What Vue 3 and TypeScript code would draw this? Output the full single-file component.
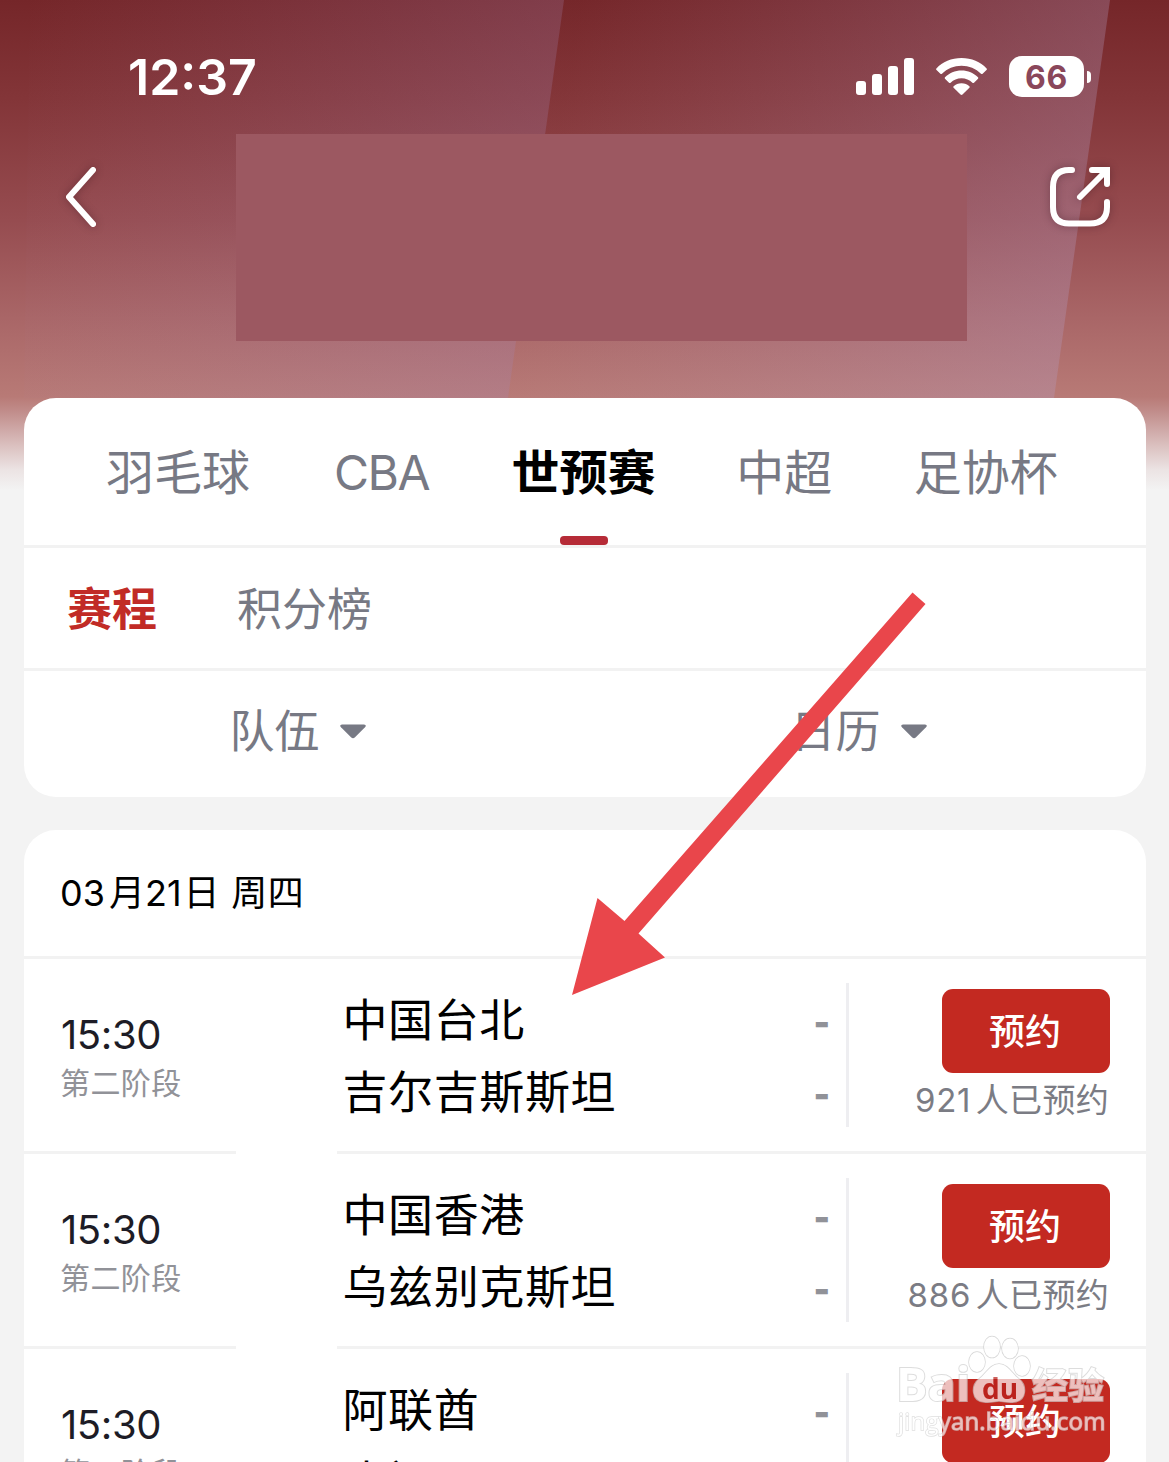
<script setup lang="ts">
interface Tab { label: string; active?: boolean; latin?: boolean }
interface Match { time: string; stage: string; home: string; away: string; booked: number }

const tabs: Tab[] = [
  { label: '羽毛球' },
  { label: 'CBA', latin: true },
  { label: '世预赛', active: true },
  { label: '中超' },
  { label: '足协杯' },
]

const filters: string[] = ['队伍', '日历']

const matches: Match[] = [
  { time: '15:30', stage: '第二阶段', home: '中国台北', away: '吉尔吉斯斯坦', booked: 921 },
  { time: '15:30', stage: '第二阶段', home: '中国香港', away: '乌兹别克斯坦', booked: 886 },
  { time: '15:30', stage: '第二阶段', home: '阿联酋', away: '也门', booked: 802 },
]
</script>

<template>
  <div class="screen">
    <svg class="backdrop" viewBox="0 0 1169 490" aria-hidden="true">
      <defs>
        <linearGradient id="base" x1="0" y1="0" x2="0" y2="1">
          <stop offset="0" stop-color="#752629" />
          <stop offset="0.2" stop-color="#833538" />
          <stop offset="0.45" stop-color="#964c50" />
          <stop offset="0.65" stop-color="#a96667" />
          <stop offset="0.81" stop-color="#b87a76" />
          <stop offset="0.84" stop-color="#c18d8b" />
          <stop offset="0.91" stop-color="#dbc1c0" />
          <stop offset="0.96" stop-color="#ece4e4" />
          <stop offset="1" stop-color="#f3f3f3" />
        </linearGradient>
        <linearGradient id="bandA" x1="0" y1="0" x2="1" y2="0.12">
          <stop offset="0" stop-color="#a586b4" stop-opacity="0" />
          <stop offset="1" stop-color="#a586b4" stop-opacity="0.25" />
        </linearGradient>
        <linearGradient id="bandB" x1="0" y1="0" x2="1" y2="0.12">
          <stop offset="0" stop-color="#b49bc0" stop-opacity="0" />
          <stop offset="0.12" stop-color="#b49bc0" stop-opacity="0.01" />
          <stop offset="1" stop-color="#b49bc0" stop-opacity="0.31" />
        </linearGradient>
      </defs>
      <rect width="1169" height="490" fill="url(#base)" />
      <path d="M30 0H564L508 398H24z" fill="url(#bandA)" />
      <path d="M564 0H1110L1054 398H508z" fill="url(#bandB)" />
    </svg>

    <header class="header">
      <div class="status">
        <span class="clock">12:37</span>
        <div class="indicators">
          <svg class="signal" viewBox="0 0 58 38">
            <rect x="0" y="23" width="10" height="14" rx="3" />
            <rect x="16" y="16" width="10" height="21" rx="3" />
            <rect x="32" y="8" width="10" height="29" rx="3" />
            <rect x="48" y="0" width="10" height="37" rx="3" />
          </svg>
          <svg class="wifi" viewBox="0 0 51 38">
            <path d="M25.500 0C35.500 0 44.500 4 50.600 10.400Q51.200 11.200 50.500 12L46.600 15.800Q45.800 16.400 45 15.700C39.800 10.700 33 7.800 25.500 7.800S11.200 10.700 6 15.700Q5.200 16.400 4.400 15.800L.5 12Q-.2 11.200 .4 10.400C6.500 4 15.500 0 25.500 0z" />
            <path d="M25.500 12.500C32 12.500 37.700 15 42 19.200Q42.700 20 42 20.800L38 24.700Q37.200 25.300 36.400 24.700C33.500 22 29.700 20.300 25.500 20.300S17.500 22 14.600 24.700Q13.800 25.300 13 24.700L9 20.800Q8.300 20 9 19.200C13.300 15 19 12.500 25.500 12.500z" />
            <path d="M25.500 25.300C28.700 25.300 31.400 26.400 33.400 28.200Q34.100 29 33.400 29.800L26.500 36.600Q25.500 37.500 24.500 36.600L17.600 29.800Q16.900 29 17.600 28.200C19.600 26.400 22.300 25.300 25.500 25.300z" />
          </svg>
          <div class="battery">66</div>
          <div class="nub"></div>
        </div>
      </div>
      <div class="nav">
        <svg class="back" viewBox="0 0 36 64"><path d="M30 6L6 33L30 60" /></svg>
        <div class="title"></div>
        <svg class="share" viewBox="0 0 66 66">
          <path d="M25 6H22Q6 6 6 23V43Q6 59.500 22 59.500H43Q60 59.500 60 43V38" />
          <path d="M33 33L58 8M45 6H60V20" />
        </svg>
      </div>
    </header>

    <section class="card menu">
      <nav class="tabs">
        <span v-for="t in tabs" :key="t.label" class="tab" :class="{ active: t.active, latin: t.latin }">{{ t.label }}</span>
      </nav>
      <nav class="subtabs">
        <span class="subtab active">赛程</span>
        <span class="subtab">积分榜</span>
      </nav>
      <div class="filters">
        <div v-for="f in filters" :key="f" class="filter">
          <span>{{ f }}</span>
          <svg class="caret" viewBox="0 0 26 15"><path d="M2 .5H24Q27 1 25 3.300L15 13.300Q13 15 11 13.300L1 3.300Q-1 1 2 .5z" /></svg>
        </div>
      </div>
    </section>

    <section class="card list">
      <h2 class="date">03<i class="month">月</i>21<i class="day">日</i> <i class="week">周四</i></h2>
      <article v-for="m in matches" :key="m.home" class="match">
        <div class="when">
          <span class="time">{{ m.time }}</span>
          <span class="stage">{{ m.stage }}</span>
        </div>
        <div class="teams">
          <div class="team"><span>{{ m.home }}</span><b>-</b></div>
          <div class="team"><span>{{ m.away }}</span><b>-</b></div>
        </div>
        <div class="action">
          <button class="book">预约</button>
          <span class="count"><em>{{ m.booked }}</em>人已预约</span>
        </div>
      </article>
    </section>

    <svg class="arrow" viewBox="0 0 1169 1462" aria-hidden="true">
      <path d="M912.500 592.500L925.500 604L638.500 933.500L665 957.500L572 995L597.500 898L624.500 921z" fill="#e9464b" />
    </svg>

    <div class="watermark" aria-hidden="true">
      <div class="brand">
        <span class="bai">Bai</span>
        <span class="paw">
          <svg viewBox="0 0 66 74">
            <ellipse cx="11" cy="27" rx="8" ry="10" />
            <ellipse cx="26" cy="12" rx="8" ry="10.500" />
            <ellipse cx="44" cy="13.500" rx="8" ry="10" />
            <ellipse cx="56" cy="31" rx="8" ry="10" />
            <path d="M33 29C42 29 46 39 53 44C61 50 61 66 48 67C41 68 37 66 33 66S25 68 18 67C5 66 5 50 13 44C20 39 24 29 33 29z" />
          </svg>
          <span class="du">du</span>
        </span>
        <span class="exp">经验</span>
      </div>
      <div class="site">jingyan.baidu.com</div>
    </div>
  </div>
</template>

<style>
body { margin: 0; overflow: hidden; }
</style>

<style scoped>
.screen {
  position: relative;
  box-sizing: border-box;
  width: 1169px;
  height: 1462px;
  overflow: hidden;
  background: #f3f3f3;
  font-family: Inter, "Noto Sans CJK SC", sans-serif;
  color: #000;
}
.backdrop { position: absolute; left: 0; top: 0; width: 1169px; height: 490px; }
.header { position: relative; height: 398px; }
.status {
  display: flex;
  justify-content: space-between;
  align-items: flex-start;
  box-sizing: border-box;
  height: 134px;
  padding: 56px 78px 0 128px;
}
.clock { color: #fff; font-size: 50px; font-weight: 600; line-height: 42px; }
.indicators { display: flex; align-items: center; }
.signal { width: 58px; height: 38px; fill: #fff; margin-right: 22px; }
.wifi { width: 51px; height: 38px; fill: #fff; margin-right: 22px; }
.battery {
  box-sizing: border-box;
  width: 75px;
  height: 41px;
  border-radius: 13px;
  background: #fff;
  color: #8a475b;
  font-size: 32px;
  font-weight: 650;
  letter-spacing: 0.8px;
  line-height: 43px;
  text-align: center;
}
.nub { width: 4px; height: 12px; margin-left: 3px; border-radius: 0 5px 5px 0; background: #fff; }
.nav { display: flex; height: 207px; padding: 0 56px 0 63px; }
.back, .share { fill: none; stroke: #fff; stroke-width: 6; stroke-linecap: round; stroke-linejoin: round; filter: drop-shadow(0 0 4px rgba(40, 10, 20, 0.35)); }
.back { width: 36px; height: 64px; margin-top: 30px; }
.title { width: 731px; margin-left: 137px; background: #9c5861; }
.share { width: 66px; height: 66px; margin: 30px 0 0 80px; stroke-linejoin: miter; }

.card { position: relative; margin: 0 23px 0 24px; background: #fff; border-radius: 32px; overflow: hidden; }
.menu { height: 399px; }
.tabs {
  display: flex;
  gap: 81.5px;
  height: 147px;
  padding-left: 82px;
  border-bottom: 3px solid #f2f2f2;
  color: #777984;
  font-size: 48px;
  line-height: 150px;
}
.tab { position: relative; height: 147px; white-space: nowrap; }
.tab.latin { margin: 0 1px 0 2.5px; letter-spacing: -1.5px; line-height: 149px; }
.tab.active { margin-right: -1px; color: #000; font-weight: 700; }
.tab.active::after {
  content: "";
  position: absolute;
  left: 48.500px;
  bottom: 0;
  width: 48px;
  height: 9px;
  border-radius: 4px;
  background: #b62b37;
}
.subtabs {
  display: flex;
  gap: 80px;
  height: 120px;
  padding-left: 43px;
  border-bottom: 3px solid #f2f2f2;
  color: #777984;
  font-size: 45px;
  line-height: 124px;
}
.subtab.active { color: #c12b26; font-weight: 700; }
.filters { display: grid; grid-template-columns: 1fr 1fr; height: 120px; }
.filter { display: flex; align-items: center; justify-content: center; gap: 20px; padding-right: 14px; color: #777984; font-size: 45px; }
.filter span { margin-top: -6px; }
.caret { width: 26px; height: 15px; fill: #777984; }

.list { margin-top: 33px; height: 700px; }
.date { box-sizing: border-box; height: 129px; margin: 0; padding-left: 36px; border-bottom: 3px solid #f2f2f2; font-size: 36px; font-weight: 400; line-height: 127px; }
.date i { font-style: normal; }
.month { margin: 0 0 0 4px; }
.day { margin: 0 1.5px 0 2px; }
.week { letter-spacing: 0.5px; }
.match { display: flex; position: relative; height: 195px; }
.match::after {
  content: "";
  position: absolute;
  left: 0;
  right: 0;
  bottom: 0;
  height: 3px;
  background: linear-gradient(90deg, #f2f2f2 212px, #fff 212px, #fff 313px, #f2f2f2 313px);
}
.when { display: flex; flex-direction: column; box-sizing: border-box; width: 319px; padding: 51px 0 0 37px; }
.time { color: #1d1c26; font-size: 40px; line-height: 50px; letter-spacing: -0.4px; }
.stage { margin: 3px 0 0 -1px; color: #919298; font-size: 30px; line-height: 40px; letter-spacing: 0.4px; }
.teams { width: 503px; height: 144px; margin-top: 24px; border-right: 3px solid #eeeef1; }
.team { display: flex; justify-content: space-between; height: 72px; padding-right: 16px; font-size: 45px; line-height: 76px; letter-spacing: 0.6px; }
.team span { margin-left: -0.5px; }
.team b { color: #919298; font-size: 35px; font-weight: 900; line-height: 79px; letter-spacing: 0; }
.action { flex: 1; display: flex; flex-direction: column; align-items: flex-end; padding: 30px 36px 0 0; }
.book { width: 168px; height: 84px; padding: 0 2px 0 0; border: 0; border-radius: 11px; background: #c32921; color: #fff; font: 500 36px/87px Inter, "Noto Sans CJK SC", sans-serif; }
.count { margin: 5px 1px 0 0; color: #7b7c84; font-size: 33px; line-height: 44px; letter-spacing: 0.3px; white-space: nowrap; }
.count em { font-style: normal; margin-right: 4.500px; letter-spacing: 0.8px; }

.arrow { position: absolute; left: 0; top: 0; width: 1169px; height: 1462px; }

.watermark { position: absolute; left: 895px; top: 1335px; width: 216px; color: #fff; opacity: 0.7; -webkit-text-stroke: 2px #cfcfcf; paint-order: stroke fill; }
.brand { display: flex; height: 72px; }
.bai { width: 71px; padding-left: 1px; box-sizing: border-box; font: 700 47px/96px "Open Sans", sans-serif; }
.paw { position: relative; width: 66px; }
.paw svg { width: 66px; height: 74px; fill: #fff; stroke: #c6c6c6; stroke-width: 1.5; }
.du { position: absolute; left: 16px; top: 39px; color: #b9201b; font: 700 28px/28px "Open Sans", sans-serif; -webkit-text-stroke: 0; }
.exp { font: 700 36px/97px "Noto Sans CJK SC", sans-serif; white-space: nowrap; }
.site { padding-left: 3px; font: 400 24px/28px "Open Sans", sans-serif; letter-spacing: 0.2px; white-space: nowrap; -webkit-text-stroke: 1.4px #d2d2d2; }
</style>
